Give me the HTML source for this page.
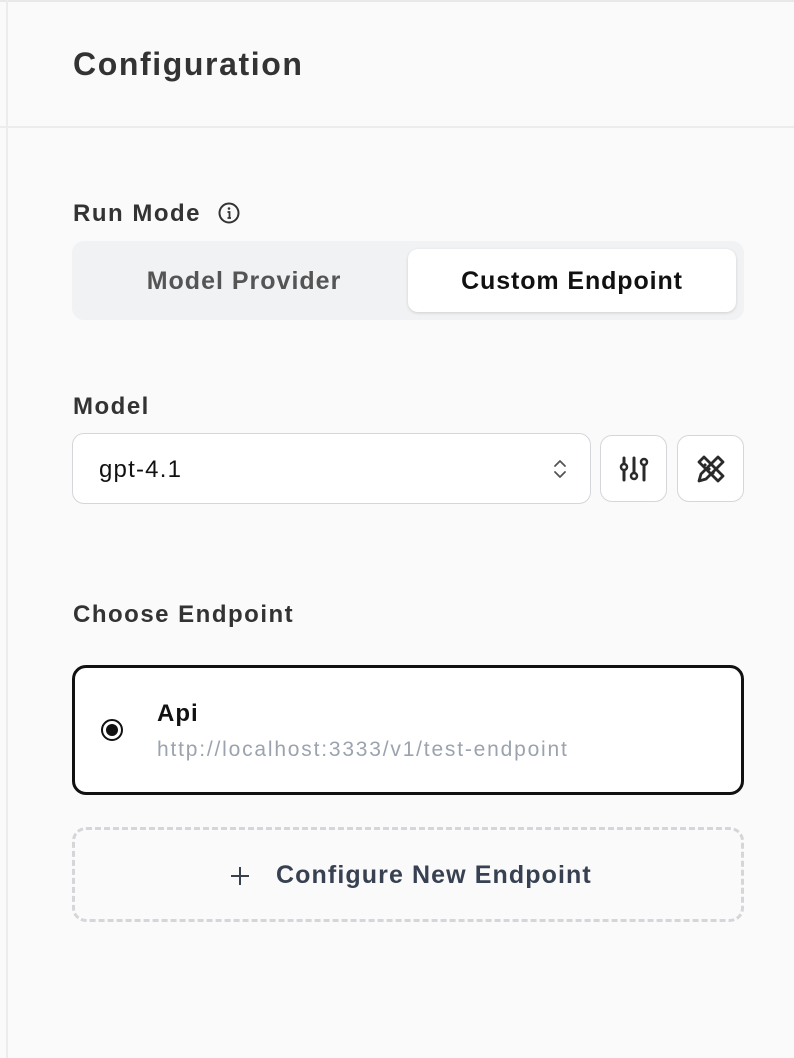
<!DOCTYPE html>
<html><head><meta charset="utf-8"><style>
*{box-sizing:border-box;margin:0;padding:0}
body{width:794px;height:1058px;background:#fafafa;font-family:"Liberation Sans",sans-serif;position:relative;overflow:hidden;color:#333}
.a{position:absolute;white-space:nowrap}
.lbl{font-size:24px;font-weight:700;color:#333;letter-spacing:1.5px}
</style></head><body>
<div class="a" style="left:0;top:0;width:794px;height:2px;background:#e8e8e8"></div>
<div class="a" style="left:6px;top:0;width:2px;height:1058px;background:#ececec"></div>
<div class="a" style="left:0;top:126px;width:794px;height:2px;background:#ececec"></div>
<div class="a" style="left:73px;top:46px;font-size:32px;font-weight:700;color:#333;letter-spacing:1.6px">Configuration</div>

<div class="a lbl" style="left:73px;top:200px">Run Mode</div>
<svg class="a" style="left:217px;top:201px" width="24" height="24" viewBox="0 0 24 24"><circle cx="12" cy="12" r="9.5" fill="none" stroke="#333" stroke-width="2"/><circle cx="12" cy="7.5" r="1.3" fill="#333"/><path d="M10.5 11h2v6M10.5 17h3.5" stroke="#333" stroke-width="1.8" fill="none"/></svg>

<div class="a" style="left:72px;top:241px;width:672px;height:79px;background:#f1f2f4;border-radius:12px"></div>
<div class="a" style="left:408px;top:249px;width:328px;height:63px;background:#fff;border-radius:10px;box-shadow:0 1px 3px rgba(0,0,0,.15)"></div>
<div class="a" style="left:80px;top:267px;width:328px;text-align:center;font-size:25px;color:#555;font-weight:700;letter-spacing:1px">Model Provider</div>
<div class="a" style="left:408px;top:267px;width:328px;text-align:center;font-size:25px;color:#111;font-weight:700;letter-spacing:0.9px">Custom Endpoint</div>

<div class="a lbl" style="left:73px;top:393px">Model</div>
<div class="a" style="left:72px;top:433px;width:519px;height:71px;border:1.5px solid #d4d6da;border-radius:12px;background:#fff"></div>
<div class="a" style="left:99px;top:456px;font-size:24px;color:#111;letter-spacing:1.2px">gpt-4.1</div>
<svg class="a" style="left:550px;top:456px" width="20" height="26" viewBox="0 0 20 26"><path d="M5 10l5-5 5 5M5 16l5 5 5-5" fill="none" stroke="#555" stroke-width="1.8" stroke-linecap="round" stroke-linejoin="round"/></svg>

<div class="a" style="left:600px;top:435px;width:67px;height:67px;border:1.5px solid #d4d6da;border-radius:12px;background:#fff"></div>
<svg class="a" style="left:619px;top:454px" width="30" height="30" viewBox="0 0 30 30" fill="none" stroke="#2a2a2a" stroke-width="3" stroke-linecap="round"><path d="M5 4v5M5 17v9M15 4v14M25 12v14"/><circle cx="5" cy="13" r="3" stroke-width="2.5"/><circle cx="15" cy="22" r="3" stroke-width="2.5"/><circle cx="25" cy="8" r="3" stroke-width="2.5"/></svg>

<div class="a" style="left:677px;top:435px;width:67px;height:67px;border:1.5px solid #d4d6da;border-radius:12px;background:#fff"></div>
<svg class="a" style="left:695px;top:453px" width="32" height="32" viewBox="0 0 32 32" fill="none" stroke="#2a2a2a" stroke-width="2.8" stroke-linejoin="round"><path d="M4 9l5-5 19 19-5 5z"/><path d="M9 13l2-2M13 17l2-2M17 21l2-2"/><path d="M23 4l5 5-17 17-7 2 2-7z"/></svg>

<div class="a lbl" style="left:73px;top:601px">Choose Endpoint</div>
<div class="a" style="left:72px;top:665px;width:672px;height:130px;border:3px solid #111;border-radius:14px;background:#fff"></div>
<svg class="a" style="left:100px;top:718px" width="24" height="24" viewBox="0 0 24 24"><circle cx="12" cy="12" r="10" fill="#fff" stroke="#111" stroke-width="2"/><circle cx="12" cy="12" r="6" fill="#111"/></svg>
<div class="a" style="left:157px;top:700px;font-size:24px;font-weight:700;color:#111;letter-spacing:1px">Api</div>
<div class="a" style="left:157px;top:738px;font-size:21px;color:#9ca3af;letter-spacing:1.8px">http://localhost:3333/v1/test-endpoint</div>

<div class="a" style="left:72px;top:827px;width:672px;height:95px;border:3px dashed #d4d6da;border-radius:14px"></div>
<svg class="a" style="left:229px;top:865px" width="22" height="22" viewBox="0 0 22 22"><path d="M11 2v18M2 11h18" stroke="#374151" stroke-width="2"/></svg>
<div class="a" style="left:276px;top:861px;font-size:25px;font-weight:700;color:#374151;letter-spacing:1.1px">Configure New Endpoint</div>
</body></html>
